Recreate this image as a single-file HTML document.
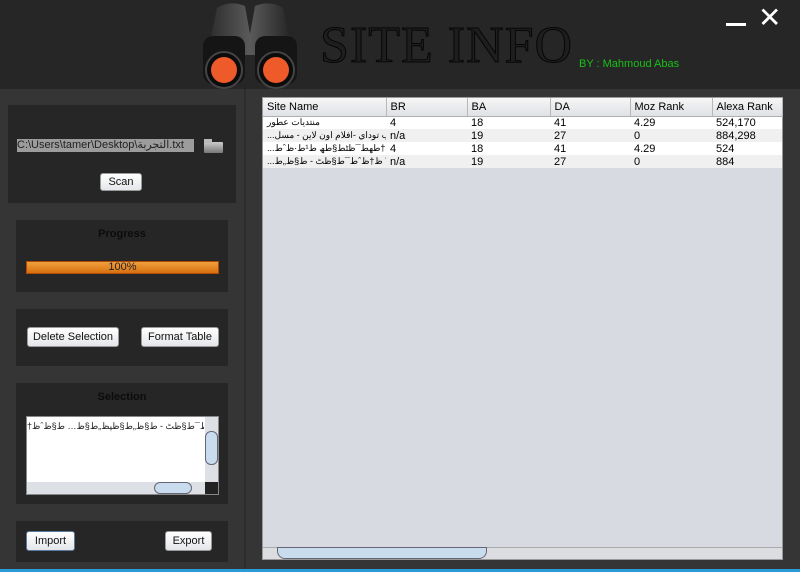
<!DOCTYPE html>
<html><head><meta charset="utf-8"><style>
*{margin:0;padding:0;box-sizing:border-box}
body{width:800px;height:572px;background:#353535;position:relative;overflow:hidden;font-family:"Liberation Sans",sans-serif;font-size:11px}
.a{position:absolute}
.box{position:absolute;background:#262626}
.btn{position:absolute;background:linear-gradient(#fff,#e4e6ea);border:1px solid #9a9a9a;border-radius:3px;color:#111;font-size:11px;text-align:center}
table{border-collapse:collapse;width:519px;table-layout:fixed;font-size:11px;font-family:"Liberation Sans","Noto Sans CJK SC",sans-serif}
td,th{height:13px;padding:0 4px;text-align:left;font-weight:normal;white-space:nowrap;overflow:hidden}
th{height:18px;background:linear-gradient(#f6f6f6,#dfe1e5);border-right:1px solid #b8b8b8;border-bottom:1px solid #b0b0b0}
</style></head><body>
<div class="a" style="left:0;top:0;width:800px;height:89px;background:#262626"></div>
<svg class="a" style="left:195px;top:0" width="110" height="90">
<defs><linearGradient id="g" x1="0" x2="1"><stop offset="0" stop-color="#2a2a2a"/><stop offset="0.5" stop-color="#5a5a5a"/><stop offset="1" stop-color="#222"/></linearGradient></defs>
<path d="M22 8 Q35 0 50 6 L55 34 L60 6 Q75 0 88 8 L98 55 L12 55Z" fill="url(#g)"/>
<rect x="8" y="36" width="42" height="48" rx="10" fill="#151515"/>
<rect x="60" y="36" width="42" height="48" rx="10" fill="#151515"/>
<circle cx="29" cy="70" r="18" fill="#0c0c0c" stroke="#444" stroke-width="2"/>
<circle cx="81" cy="70" r="18" fill="#0c0c0c" stroke="#444" stroke-width="2"/>
<circle cx="29" cy="70" r="13" fill="#ee5a2a"/>
<circle cx="81" cy="70" r="13" fill="#ee5a2a"/>
</svg>
<div class="a" style="left:320px;top:20px;font-family:'Liberation Serif',serif;font-size:52px;color:#1e1e1e;-webkit-text-stroke:1px #060606;letter-spacing:1px;line-height:52px">SITE INFO</div>
<div class="a" style="left:579px;top:58px;color:#19c019;font-size:11px">BY : Mahmoud Abas</div>
<div class="a" style="left:726px;top:23px;width:20px;height:3px;background:#fff"></div>
<div class="a" style="left:758px;top:5px;color:#fff;font-size:28px;line-height:26px">✕</div>
<div class="a" style="left:244px;top:89px;width:2px;height:483px;background:#2c2c2c"></div>

<div class="box" style="left:8px;top:105px;width:228px;height:98px"></div>
<div class="a" style="left:17px;top:139px;width:177px;height:13px;background:#9c9c9c;color:#222;font-size:11px;line-height:13px;font-family:'Liberation Sans','Noto Sans CJK SC',sans-serif">C:\Users\tamer\Desktop\التجربة.txt</div>
<div class="a" style="left:204px;top:142px;width:19px;height:11px;background:linear-gradient(#ccc,#777);border-radius:1px"></div>
<div class="a" style="left:204px;top:139px;width:8px;height:4px;background:#bbb"></div>
<div class="btn" style="left:100px;top:173px;width:42px;height:18px;line-height:16px">Scan</div>

<div class="box" style="left:16px;top:220px;width:212px;height:72px"></div>
<div class="a" style="left:16px;top:228px;width:212px;text-align:center;font-weight:bold;color:#0c0c0c">Progress</div>
<div class="a" style="left:26px;top:261px;width:193px;height:13px;background:linear-gradient(#f0a040,#d8700e);border:1px solid #b04a00;text-align:center;color:#222;line-height:11px">100%</div>

<div class="box" style="left:16px;top:309px;width:212px;height:57px"></div>
<div class="btn" style="left:27px;top:327px;width:92px;height:20px;line-height:18px">Delete Selection</div>
<div class="btn" style="left:141px;top:327px;width:78px;height:20px;line-height:18px">Format Table</div>

<div class="box" style="left:16px;top:383px;width:212px;height:121px"></div>
<div class="a" style="left:16px;top:391px;width:212px;text-align:center;font-weight:bold;color:#0c0c0c">Selection</div>
<div class="a" style="left:26px;top:416px;width:193px;height:79px;background:#fff;border:1px solid #888"></div>
<div class="a" style="left:27px;top:421px;width:177px;overflow:hidden;white-space:nowrap;font-size:9px;color:#222">†ط¹ط±ط¨ ظ†ظˆط¯ط§ظٹ - ط§ظ„ط§ظپظ„ط§ظ… ط§ظˆظ†</div>
<div class="a" style="left:205px;top:417px;width:13px;height:65px;background:#dde0e4"></div>
<div class="a" style="left:205px;top:431px;width:13px;height:34px;background:#c8dcee;border:1px solid #667;border-radius:6px"></div>
<div class="a" style="left:27px;top:482px;width:178px;height:12px;background:#dde0e4"></div>
<div class="a" style="left:154px;top:482px;width:38px;height:12px;background:#c8dcee;border:1px solid #667;border-radius:6px"></div>
<div class="a" style="left:205px;top:482px;width:13px;height:12px;background:#222"></div>

<div class="box" style="left:16px;top:521px;width:212px;height:41px"></div>
<div class="btn" style="left:26px;top:531px;width:49px;height:20px;line-height:18px;border-color:#5a7aa0">Import</div>
<div class="btn" style="left:165px;top:531px;width:47px;height:20px;line-height:18px">Export</div>

<div class="a" style="left:262px;top:97px;width:521px;height:463px;background:#d7dae0;border:1px solid #999">
<table>
<colgroup><col style="width:123px"><col style="width:81px"><col style="width:83px"><col style="width:80px"><col style="width:82px"><col style="width:70px"></colgroup>
<tr><th>Site Name</th><th>BR</th><th>BA</th><th>DA</th><th>Moz Rank</th><th>Alexa Rank</th></tr>
<tr style="background:#fff"><td style="font-size:9px">منتديات عطور</td><td>4</td><td>18</td><td>41</td><td>4.29</td><td>524,170</td></tr>
<tr style="background:#f0f0f0"><td style="font-size:9px">...عرب توداي -افلام اون لاين - مسل</td><td>n/a</td><td>19</td><td>27</td><td>0</td><td>884,298</td></tr>
<tr style="background:#fff"><td style="font-size:9px">...ظ…ظ†طھط¯ظٹط§طھ ط¹ط·ظˆط±</td><td>4</td><td>18</td><td>41</td><td>4.29</td><td>524</td></tr>
<tr style="background:#f0f0f0"><td style="font-size:9px">...ط¹ط±ط¨ ظ†ظˆط¯ط§ظٹ - ط§ظ„ط§</td><td>n/a</td><td>19</td><td>27</td><td>0</td><td>884</td></tr>
</table>
<div class="a" style="left:0;top:449px;width:519px;height:12px;background:#dcdde0;border-top:1px solid #aaa"></div>
<div class="a" style="left:14px;top:449px;width:210px;height:12px;background:#c8dcee;border:1px solid #667;border-radius:0 0 8px 8px"></div>
</div>
<div class="a" style="left:0;top:569px;width:800px;height:3px;background:#2a9ad8"></div>
</body></html>
